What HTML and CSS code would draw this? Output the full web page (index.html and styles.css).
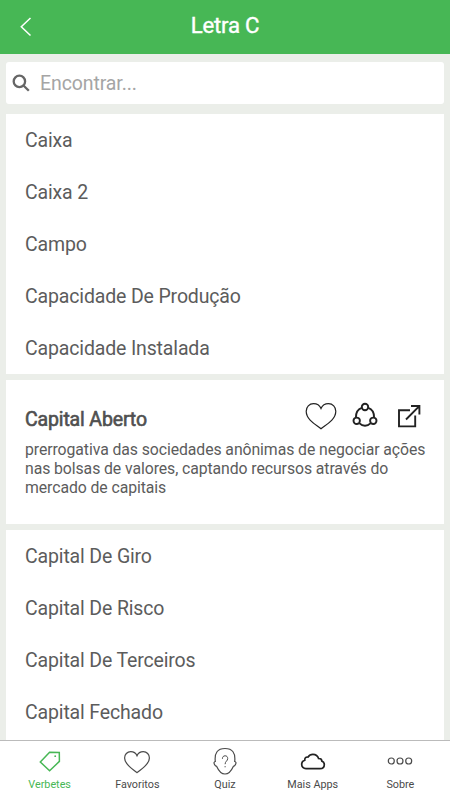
FILE: index.html
```html
<!DOCTYPE html>
<html lang="pt-BR">
<head>
<meta charset="utf-8">
<meta name="viewport" content="width=device-width, initial-scale=1">
<title>Letra C</title>
<link rel="stylesheet" href="styles.css">
</head>
<body>
<div class="app">
  <header class="header">
    <svg class="back" viewBox="0 0 12 20"><path d="M10.500 1 1.300 9.700l9.200 8.800"/></svg>
    <h1 class="title">Letra C</h1>
    <span></span>
  </header>
  <main class="content">
    <label class="search">
      <svg class="search-icon" viewBox="0 0 18 18"><circle cx="7.400" cy="7.400" r="5.700"/><path d="m11.500 11.500 5.300 5.300"/></svg>
      <span class="placeholder">Encontrar...</span>
    </label>
    <ul class="card list">
      <li class="item"><span>Caixa</span></li>
      <li class="item"><span>Caixa 2</span></li>
      <li class="item"><span>Campo</span></li>
      <li class="item"><span>Capacidade De Produção</span></li>
      <li class="item"><span>Capacidade Instalada</span></li>
    </ul>
    <article class="card entry">
      <div class="entry-head">
        <h2 class="entry-title">Capital Aberto</h2>
        <div class="actions">
          <svg class="heart" viewBox="0 0 32 28"><path d="M16 26.800C12 23.300 1.200 18 1.200 9.200 1.200 5.100 4.300 1.700 8.500 1.700c3.400 0 6.200 1.800 7.500 4.800 1.300-3 4.100-4.800 7.500-4.800 4.200 0 7.300 3.400 7.300 7.500 0 8.800-10.800 14.100-14.800 17.600z"/></svg>
          <svg class="share" viewBox="0 0 26 26"><circle cx="13" cy="5" r="3.200"/><circle cx="4.700" cy="18.800" r="3.200"/><circle cx="21.300" cy="18.800" r="3.200"/><path d="M9.700 5.900C6 7.200 3.900 10.500 3.900 15.400M16.300 5.900c3.700 1.300 5.800 4.600 5.800 9.500M7.200 21.100c3.600 3.400 8 3.400 11.600 0"/></svg>
          <svg class="external" viewBox="0 0 24 24"><path d="M13 6.200H2v16.200h16.200V11.500M9 15.500 22 2.300M14 2h8.400v8.400"/></svg>
        </div>
      </div>
      <p class="definition">prerrogativa das sociedades anônimas de negociar ações nas bolsas de valores, captando recursos através do mercado de capitais</p>
    </article>
    <ul class="card list">
      <li class="item"><span>Capital De Giro</span></li>
      <li class="item"><span>Capital De Risco</span></li>
      <li class="item"><span>Capital De Terceiros</span></li>
      <li class="item"><span>Capital Fechado</span></li>
    </ul>
  </main>
  <nav class="tabs">
    <a class="tab active">
      <svg viewBox="0 0 30 30"><path d="M5.300 17 14.600 7.200l9.700.2.1 9L14.600 25.800z"/><circle class="dot" cx="20.200" cy="11.200" r=".9"/></svg>
      <span>Verbetes</span>
    </a>
    <a class="tab">
      <svg viewBox="0 0 30 30"><path d="M15 27.600C11.700 24.500 2.600 20.200 2.600 12.900c0-3.400 2.600-6.200 6.100-6.200 2.900 0 5.200 1.500 6.300 4 1.100-2.500 3.400-4 6.300-4 3.500 0 6.100 2.800 6.100 6.200C27.400 20.200 18.300 24.500 15 27.600z"/></svg>
      <span>Favoritos</span>
    </a>
    <a class="tab">
      <svg class="quiz" viewBox="0 0 30 30"><path d="M5.300 16.500C4.300 7.800 7.600 3.500 15 3.500s10.700 4.300 9.700 13c1.200.2 1.700 1.300.8 3-.6 1.200-1.200 1.600-2.200 1.900-1.600 3.500-4.800 7.600-8.300 7.600s-6.700-4.100-8.300-7.600c-1-.3-1.600-.7-2.200-1.900-.9-1.700-.4-2.800.8-3z"/><path class="mark" d="M12.400 13.800c0-2 1.100-3 2.700-3s2.600 1 2.600 2.700c0 2.600-2.600 2.700-2.600 5.700m0 1.900v1.200"/></svg>
      <span>Quiz</span>
    </a>
    <a class="tab">
      <svg class="cloud" viewBox="0 0 30 30"><path d="M8 23.600c-2.600 0-4.300-1.800-4.300-4.200 0-2.200 1.200-3.700 3.100-4.200-.2-2.300 1.200-3.500 3.200-3.100 1.100-1.800 2.800-2.800 4.900-2.800 2.900 0 4.900 1.600 5.700 4.200 2-.1 3.200 1 3.300 2.600 1.500.6 2.400 1.700 2.400 3.300 0 2.500-1.700 4.200-4.300 4.200z"/></svg>
      <span>Mais Apps</span>
    </a>
    <a class="tab">
      <svg viewBox="0 0 30 30"><circle cx="6.300" cy="16" r="3"/><circle cx="15" cy="16" r="3"/><circle cx="23.700" cy="16" r="3"/></svg>
      <span>Sobre</span>
    </a>
  </nav>
</div>
</body>
</html>
```
FILE: styles.css
```css
* { box-sizing: border-box; }
body {
  margin: 0;
  background: #ebeee9;
  color: #5c5c5c;
  font-family: Roboto, "Liberation Sans", sans-serif;
}
h1, h2, p, ul { margin: 0; padding: 0; }
svg {
  display: block;
  fill: none;
  stroke: currentColor;
}
.app {
  height: 800px;
  display: flex;
  flex-direction: column;
  overflow: hidden;
}
.header {
  height: 54px;
  flex: none;
  display: grid;
  grid-template-columns: 32px 1fr 32px;
  align-items: center;
  background: #47b755;
  color: #fff;
}
.back {
  width: 12px;
  height: 20px;
  margin-left: 20px;
  stroke-width: 1.5;
}
.title {
  font-size: 22.2px;
  letter-spacing: -0.2px;
  line-height: 30px;
  font-weight: 400;
  -webkit-text-stroke: 0.4px currentColor;
  text-align: center;
  padding-bottom: 4px;
}
.content {
  flex: 1;
  min-height: 0;
  overflow: hidden;
  padding: 8px 6px 0;
}
.search {
  height: 42px;
  display: flex;
  align-items: center;
  gap: 10px;
  margin-bottom: 10px;
  padding-left: 6px;
  border-radius: 3px;
  background: #fff;
}
.search-icon {
  width: 18px;
  height: 18px;
  color: #666;
  stroke-width: 2.3;
}
.placeholder {
  color: #a5a5a5;
  font-size: 19.5px;
  letter-spacing: -0.1px;
}
.card {
  background: #fff;
  margin-bottom: 6px;
}
.list {
  height: 260px;
  list-style: none;
}
.item {
  height: 52px;
  display: flex;
  align-items: center;
  padding-left: 19px;
  font-size: 19.5px;
  letter-spacing: -0.15px;
}
.entry {
  height: 144px;
  padding: 20px 17px 0 19px;
}
.entry-head {
  display: flex;
  justify-content: space-between;
  height: 40px;
}
.entry-title {
  padding-top: 8px;
  font-size: 19.5px;
  letter-spacing: -0.15px;
  line-height: 24px;
  font-weight: 400;
  -webkit-text-stroke: 0.6px currentColor;
  color: #505050;
}
.actions {
  display: flex;
  color: #222;
  padding: 2px 6px 0 0;
}
.heart { width: 32px; height: 28px; stroke-width: 1.2; }
.share { width: 26px; height: 26px; margin-left: 15px; stroke-width: 1.9; }
.external { width: 24px; height: 24px; margin: 2px 0 0 19px; stroke-width: 1.9; }
.definition {
  font-size: 15.8px;
  letter-spacing: -0.08px;
  line-height: 19.2px;
}
.tabs {
  height: 60px;
  flex: none;
  display: grid;
  grid-template-columns: repeat(5, 87.7px);
  justify-content: center;
  border-top: 1px solid #bbb;
  background: #fff;
}
.tab {
  display: flex;
  flex-direction: column;
  align-items: center;
  padding-top: 4px;
  color: #4a4a4a;
  font-size: 10.8px;
  line-height: 14px;
}
.tab svg {
  width: 30px;
  height: 30px;
  margin-bottom: 3px;
  stroke-width: 1.2;
}
.tab .cloud { stroke-width: 1.7; color: #222; }
.tab .mark { stroke-width: 1; }
.active { color: #47b755; }
.active svg { stroke-width: 1.5; }
.active .dot { fill: currentColor; stroke: none; }
```
